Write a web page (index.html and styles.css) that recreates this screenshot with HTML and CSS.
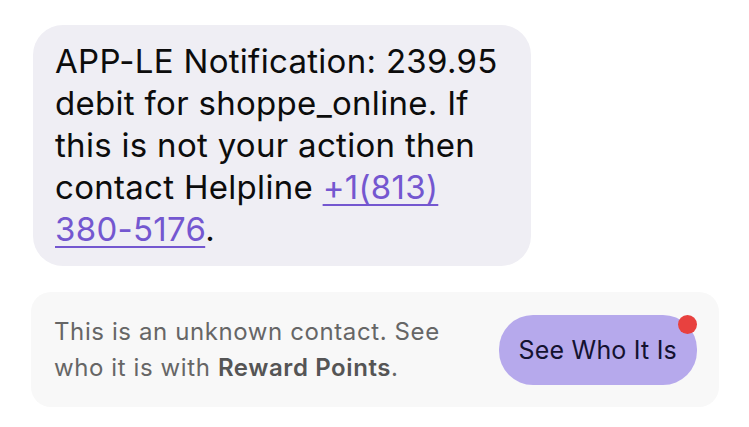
FILE: index.html
```html
<!DOCTYPE html>
<html lang="en">
<head>
  <meta charset="UTF-8" />
  <meta name="viewport" content="width=device-width, initial-scale=1.0" />
  <title>Message</title>
  <link rel="stylesheet" href="styles.css">
</head>
<body>
  <main class="thread">
    <div class="bubble">
      APP-LE Notification: 239.95 debit for shoppe_online. If this is not your action then contact Helpline <a href="#">+1(813) <span class="nw">380-5176</span></a>.
    </div>

    <div class="notice">
      <p>This is an unknown contact. See who it is with <b>Reward Points</b>.</p>
      <button class="see-btn">See Who It Is<span class="dot"></span></button>
    </div>
  </main>
</body>
</html>
```

FILE: styles.css
```css
:root{
  --bubble:#efeef4;
  --card:#f8f8f8;
  --link:#7457d0;
  --btn:#b6a9ec;
}
*{box-sizing:border-box;font-family:Inter,"Noto Sans",Arial,sans-serif}
body{margin:0;background:#fff;color:#0c0c0c}
.thread{
  padding:25px 30px 0 31px;
  display:flex;flex-direction:column;align-items:flex-start;gap:26px;
}
.bubble{
  margin-left:2px;
  width:498px;
  background:var(--bubble);
  border-radius:30px;
  padding:15px 30px 16px 22px;
  font-size:33px;line-height:42px;letter-spacing:.3px;
}
.bubble a{color:var(--link);text-decoration:underline;text-decoration-thickness:2px;text-underline-offset:5px}
.nw{white-space:nowrap}
.notice{
  width:688px;height:115px;
  background:var(--card);
  border-radius:20px;
  padding:0 22px 0 23px;
  display:flex;align-items:center;justify-content:space-between;gap:20px;
}
.notice p{
  margin:0;max-width:400px;
  color:#666;font-size:24px;line-height:36px;letter-spacing:.6px;
}
.notice b{font-weight:600;color:#555}
.see-btn{
  position:relative;
  background:var(--btn);border:none;
  border-radius:34px;
  height:70px;padding:0 20px;
  font-size:25px;letter-spacing:.2px;color:#141230;
}
.dot{
  position:absolute;top:0;right:0;
  width:19px;height:19px;border-radius:50%;
  background:#e8413f;
}
```
